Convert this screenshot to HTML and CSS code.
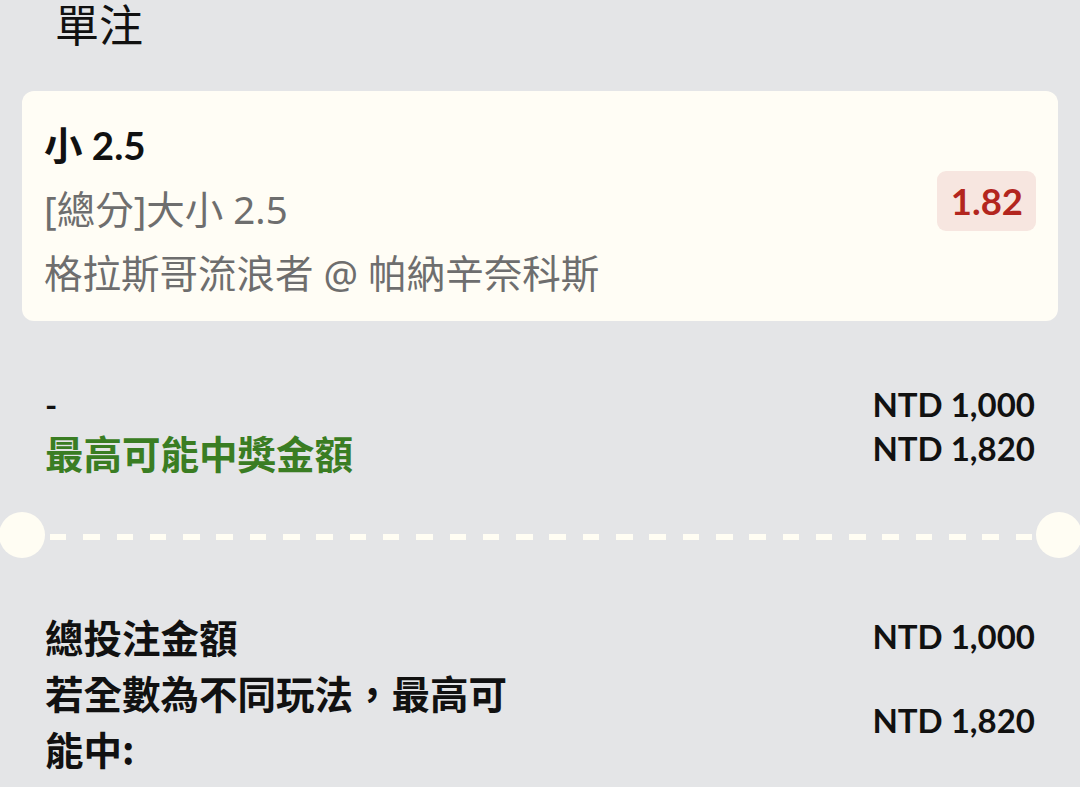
FILE: index.html
```html
<!DOCTYPE html>
<html lang="zh-Hant">
<head>
<meta charset="utf-8">
<title>單注</title>
<link rel="stylesheet" href="styles.css">
</head>
<body>
<div class="page">
  <h1 class="title">單注</h1>

  <div class="card">
    <div class="card-info">
      <div class="sel">小 2.5</div>
      <div class="market">[總分]大小 2.5</div>
      <div class="match">格拉斯哥流浪者 @ 帕納辛奈科斯</div>
    </div>
    <div class="odds">1.82</div>
  </div>

  <div class="summary">
    <div class="col-left">
      <div class="stake-input">-</div>
      <div class="win-label">最高可能中獎金額</div>
    </div>
    <div class="col-right">
      <div class="amount">NTD 1,000</div>
      <div class="amount">NTD 1,820</div>
    </div>
  </div>

  <div class="divider">
    <span class="notch notch-left"></span>
    <span class="dashes"></span>
    <span class="notch notch-right"></span>
  </div>

  <div class="totals">
    <div class="total-row row-one">
      <div class="total-label">總投注金額</div>
      <div class="amount">NTD 1,000</div>
    </div>
    <div class="total-row row-two">
      <div class="total-label wrap">若全數為不同玩法，最高可能中:</div>
      <div class="amount">NTD 1,820</div>
    </div>
  </div>
</div>
</body>
</html>
```

FILE: styles.css
```css
html, body {
  margin: 0;
  padding: 0;
  background: #e4e5e7;
}

body {
  font-family: Lato, "Noto Sans CJK TC", sans-serif;
  color: #111;
  overflow: hidden;
}

.page {
  width: 1080px;
  height: 787px;
  overflow: hidden;
}

.title {
  margin: 0;
  padding-top: 1px;
  padding-left: 55px;
  font-family: "Noto Sans CJK TC", sans-serif;
  font-size: 44px;
  font-weight: 400;
  line-height: 45px;
  color: #111;
}

.card {
  margin: 45px 22px 0 22px;
  height: 230px;
  box-sizing: border-box;
  padding: 22px 22px 16px 22px;
  background: #fffdf5;
  border-radius: 12px;
  display: flex;
  justify-content: space-between;
  align-items: center;
}

.card-info {
  display: flex;
  flex-direction: column;
  align-self: stretch;
}

.sel {
  font-family: Lato, "Noto Sans CJK TC", sans-serif;
  font-weight: 700;
  font-size: 38.5px;
  line-height: 64px;
  color: #111;
}

.market,
.match {
  font-family: "Noto Sans", "Noto Sans CJK TC", sans-serif;
  font-weight: 400;
  font-size: 38.5px;
  line-height: 64px;
  color: #6e6e6e;
}

.odds {
  background: #f7e6e0;
  color: #b3261e;
  font-family: Lato, sans-serif;
  font-weight: 700;
  font-size: 36.5px;
  line-height: 41px;
  padding: 9.5px 13px 9.5px 14px;
  border-radius: 9px;
  margin-top: -16px;
}

.summary {
  margin: 61px 45px 0 45px;
  display: flex;
  justify-content: space-between;
}

.col-left,
.col-right {
  display: flex;
  flex-direction: column;
}

.col-right {
  align-items: flex-end;
}

.stake-input {
  font-family: Lato, sans-serif;
  font-weight: 700;
  font-size: 33px;
  line-height: 44px;
}

.win-label {
  font-family: "Noto Sans CJK TC", sans-serif;
  font-weight: 700;
  font-size: 38.5px;
  line-height: 53px;
  color: #3a7d23;
}

.amount {
  font-family: Lato, sans-serif;
  font-weight: 700;
  font-size: 33px;
  line-height: 44px;
  color: #111;
  white-space: nowrap;
}

.divider {
  margin-top: 33px;
  height: 46px;
  display: flex;
  align-items: center;
}

.notch {
  flex: 0 0 46px;
  width: 46px;
  height: 46px;
  border-radius: 50%;
  background: #fffdf3;
}

.notch-left {
  margin-left: -1px;
}

.notch-right {
  margin-right: -2px;
}

.dashes {
  flex: 1;
  height: 6px;
  margin: 4px 4px 0 5px;
  background: repeating-linear-gradient(to right, #fffdf3 0 16.5px, transparent 16.5px 33.3px);
}

.totals {
  margin: 50px 45px 0 45px;
  display: flex;
  flex-direction: column;
}

.total-row {
  display: flex;
  justify-content: space-between;
  align-items: center;
}

.total-label {
  font-family: "Noto Sans CJK TC", sans-serif;
  font-weight: 700;
  font-size: 38.5px;
  line-height: 56px;
  color: #111;
}

.total-label.wrap {
  width: 475px;
}
```
